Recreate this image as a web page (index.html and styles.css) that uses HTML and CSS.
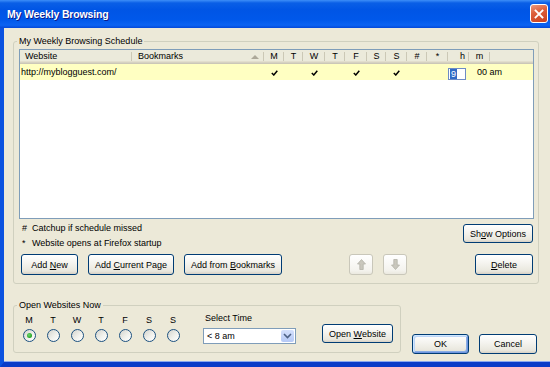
FILE: index.html
```html
<!DOCTYPE html>
<html lang="en">
<head>
    <meta charset="UTF-8">
    <meta name="viewport" content="width=device-width, initial-scale=1.0">
    <title>My Weekly Browsing</title>
    <link rel="stylesheet" href="styles.css">
</head>
<body>
    <div class="window">
        <div class="titlebar">
            <span class="title">My Weekly Browsing</span>
            <button class="close" aria-label="Close">
                <svg viewBox="0 0 10 10" width="10" height="10"><path d="M1.5 1.5l7 7M8.5 1.5l-7 7" stroke="#fff" stroke-width="1.8" stroke-linecap="square"/></svg>
            </button>
        </div>
        <div class="frame">
            <fieldset class="group schedule">
                <legend>My Weekly Browsing Schedule</legend>
                <div class="list">
                    <table class="grid">
                        <thead>
                            <tr>
                                <th class="c-site left">Website</th>
                                <th class="c-bm left">Bookmarks<span class="sort"></span></th>
                                <th class="c-mon">M</th>
                                <th class="c-tue">T</th>
                                <th class="c-wed">W</th>
                                <th class="c-thu">T</th>
                                <th class="c-fri">F</th>
                                <th class="c-sat">S</th>
                                <th class="c-sun">S</th>
                                <th class="c-catch">#</th>
                                <th class="c-start">*</th>
                                <th class="c-hour right">h</th>
                                <th class="c-min">m</th>
                                <th class="c-fill"></th>
                            </tr>
                        </thead>
                        <tbody>
                            <tr class="selected">
                                <td class="site">http://myblogguest.com/</td>
                                <td></td>
                                <td><svg class="tick" viewBox="0 0 7 6" width="7" height="6"><path d="M0.8 3l2 2L6.3 0.8" fill="none" stroke="#000" stroke-width="1.5"/></svg></td>
                                <td></td>
                                <td><svg class="tick" viewBox="0 0 7 6" width="7" height="6"><path d="M0.8 3l2 2L6.3 0.8" fill="none" stroke="#000" stroke-width="1.5"/></svg></td>
                                <td></td>
                                <td><svg class="tick" viewBox="0 0 7 6" width="7" height="6"><path d="M0.8 3l2 2L6.3 0.8" fill="none" stroke="#000" stroke-width="1.5"/></svg></td>
                                <td></td>
                                <td><svg class="tick" viewBox="0 0 7 6" width="7" height="6"><path d="M0.8 3l2 2L6.3 0.8" fill="none" stroke="#000" stroke-width="1.5"/></svg></td>
                                <td></td>
                                <td></td>
                                <td class="hour"><span class="edit"><span class="sel">9</span></span></td>
                                <td class="minute">00 am</td>
                                <td></td>
                            </tr>
                        </tbody>
                    </table>
                </div>
                <div class="notes-row">
                    <ul class="notes">
                        <li><span class="sym">#</span>Catchup if schedule missed</li>
                        <li><span class="sym">*</span>Website opens at Firefox startup</li>
                    </ul>
                    <button class="btn show-options">Sh<u>o</u>w Options</button>
                </div>
                <div class="actions">
                    <button class="btn add-new">Add <u>N</u>ew</button>
                    <button class="btn">Add <u>C</u>urrent Page</button>
                    <button class="btn">Add from <u>B</u>ookmarks</button>
                    <div class="arrows">
                        <button class="btn arrow" disabled>
                            <svg viewBox="0 0 9 11" width="9" height="11"><path d="M4.5 0.5L8.5 5H6.2v5.5H2.8V5H0.5z" fill="#c9c7bd" stroke="#b4b2a8" stroke-width="0.8"/></svg>
                        </button>
                        <button class="btn arrow" disabled>
                            <svg viewBox="0 0 9 11" width="9" height="11"><path d="M4.5 10.5L8.5 6H6.2V0.5H2.8V6H0.5z" fill="#c9c7bd" stroke="#b4b2a8" stroke-width="0.8"/></svg>
                        </button>
                    </div>
                    <button class="btn delete"><u>D</u>elete</button>
                </div>
            </fieldset>

            <div class="bottom">
                <fieldset class="group open-now">
                    <legend>Open Websites Now</legend>
                    <div class="days">
                        <div class="day"><span>M</span><span class="radio checked"></span></div>
                        <div class="day"><span>T</span><span class="radio"></span></div>
                        <div class="day"><span>W</span><span class="radio"></span></div>
                        <div class="day"><span>T</span><span class="radio"></span></div>
                        <div class="day"><span>F</span><span class="radio"></span></div>
                        <div class="day"><span>S</span><span class="radio"></span></div>
                        <div class="day"><span>S</span><span class="radio"></span></div>
                    </div>
                    <div class="time">
                        <span class="time-label">Select Time</span>
                        <div class="select">
                            <span class="select-value">&lt; 8 am</span>
                            <span class="select-btn">
                                <svg viewBox="0 0 9 6" width="9" height="6"><path d="M1 1l3.5 3.5L8 1" fill="none" stroke="#4d6185" stroke-width="1.6"/></svg>
                            </span>
                        </div>
                    </div>
                    <button class="btn open-site">Open <u>W</u>ebsite</button>
                </fieldset>
                <button class="btn ok default">OK</button>
                <button class="btn cancel">Cancel</button>
            </div>
        </div>
    </div>
</body>
</html>
```

FILE: styles.css
```css
body {
    margin: 0;
    font-family: "Liberation Sans", Arial, sans-serif;
    font-size: 9px;
    color: #000;
}
.window {
    width: 550px;
    height: 367px;
    display: flex;
    flex-direction: column;
}
.titlebar {
    height: 28px;
    flex: none;
    display: flex;
    align-items: flex-start;
    padding: 0 2px 0 7px;
    box-sizing: border-box;
    background: linear-gradient(180deg, #3d8ef8 0, #0a5fe6 3px, #0055e5 35%, #0058ea 70%, #0b63f2 90%, #0448d8 100%);
}
.title {
    margin-top: 8px;
    color: #fff;
    font-size: 10.5px;
    font-weight: bold;
    letter-spacing: -0.15px;
    text-shadow: 1px 1px #0c1c8c;
}
.close {
    margin: 4px 0 0 auto;
    width: 18px;
    height: 19px;
    padding: 0;
    display: flex;
    align-items: center;
    justify-content: center;
    border: 1px solid #fff;
    border-radius: 3px;
    background: linear-gradient(160deg, #eb9a7e 0, #dd5f3c 40%, #c94020 100%);
}
.frame {
    flex: 1;
    display: flex;
    flex-direction: column;
    background: #ece9d8;
    border-left: 4px solid #0b52e0;
    border-bottom: 5px solid #0a3cc8;
    box-shadow: inset 0 -1px #8aa8f0;
    padding: 0 11px 9px 9px;
}
.group {
    margin: 0;
    min-width: 0;
    border: 1px solid #d0d0bf;
    border-radius: 3px;
}
.group legend {
    padding: 0 2px;
    margin-left: -2px;
    line-height: 12px;
}
.schedule {
    margin-top: 7px;
    padding: 2px 4px 8px 5px;
}
.list {
    height: 170px;
    box-sizing: border-box;
    border: 1px solid #7f9db9;
    background: #fff;
    overflow: hidden;
}
.grid {
    width: 100%;
    table-layout: fixed;
    border-collapse: separate;
    border-spacing: 0;
}
.grid th,
.grid td {
    box-sizing: border-box;
    padding: 0;
    text-align: center;
    white-space: nowrap;
}
.grid th {
    height: 14px;
    font-weight: normal;
    line-height: 11px;
    padding-bottom: 2px;
    background: linear-gradient(#cbc8b6, #cbc8b6) right 2px / 1px 9px no-repeat, #ebeadb;
    box-shadow: inset 0 -1px #cbc7b8, inset 0 -2px #d6d2c2, inset 0 -3px #e2decd;
}
.grid th.c-fill {
    background: #ebeadb;
}
.grid th.left {
    text-align: left;
    padding-left: 5px;
}
.grid th.c-bm {
    padding-left: 6px;
}
.grid th.right {
    text-align: right;
    padding-right: 4px;
}
.sort {
    float: right;
    margin: 4px 5px 0 0;
    width: 0;
    height: 0;
    border-left: 4px solid transparent;
    border-right: 4px solid transparent;
    border-bottom: 4px solid #aca899;
}
.c-site { width: 112px; }
.c-bm { width: 132px; }
.c-mon { width: 20px; }
.c-tue { width: 19px; }
.c-wed { width: 22px; }
.c-thu { width: 20px; }
.c-fri { width: 22px; }
.c-sat { width: 19px; }
.c-sun { width: 21px; }
.c-catch { width: 20px; }
.c-start { width: 21px; }
.c-hour { width: 21px; }
.c-min { width: 21px; }
.grid td {
    height: 16px;
    overflow: visible;
}
.selected td {
    background: #ffffc2;
}
.grid td.site {
    text-align: left;
    padding-left: 1px;
}
.tick {
    display: block;
    margin: 1px auto 0;
}
.grid td.hour {
    text-align: left;
    vertical-align: top;
}
.edit {
    display: block;
    width: 18px;
    height: 12px;
    margin-top: 4px;
    box-sizing: border-box;
    border: 1px solid #6d8bc4;
    background: #fff;
    line-height: 10px;
    padding-left: 1px;
}
.sel {
    display: inline-block;
    background: #316ac5;
    color: #fff;
    padding: 0 1px;
}
.grid td.minute {
    text-align: left;
    padding-left: 8px;
}
.notes-row {
    display: flex;
    align-items: flex-start;
    height: 30px;
    margin-top: 2px;
    padding-right: 1px;
}
.notes {
    list-style: none;
    margin: 0;
    padding: 0 0 0 3px;
    line-height: 15px;
}
.sym {
    display: inline-block;
    width: 10px;
}
.btn {
    font: 9px "Liberation Sans", Arial, sans-serif;
    color: #000;
    height: 21px;
    padding: 0 6px;
    border: 1px solid #003c74;
    border-radius: 3px;
    background: linear-gradient(#fff 0, #f4f3ee 45%, #e9e7dd 85%, #d6d0c5 100%);
    white-space: nowrap;
}
.btn u {
    text-underline-offset: 1px;
}
.show-options {
    margin: 3px 0 0 auto;
    height: 19px;
}
.actions {
    display: flex;
    gap: 10px;
    margin-top: 3px;
    padding: 0 1px 0 2px;
}
.add-new {
    min-width: 57px;
}
.arrows {
    display: flex;
    gap: 10px;
    margin-left: auto;
}
.btn.arrow {
    width: 24px;
    padding: 0;
    display: flex;
    align-items: center;
    justify-content: center;
    border-color: #c9c7ba;
    background: linear-gradient(#fff, #f4f3ee 80%, #ebe9df);
}
.delete {
    min-width: 58px;
    margin-left: 58px;
}
.bottom {
    display: flex;
    align-items: flex-end;
    margin-top: 15px;
}
.open-now {
    width: 388px;
    box-sizing: border-box;
    padding: 4px 5px 8px 5px;
    display: flex;
    align-items: flex-start;
}
.days {
    display: flex;
    margin-left: -2px;
}
.day {
    width: 24px;
    display: flex;
    flex-direction: column;
    align-items: center;
    gap: 3px;
    line-height: 11px;
}
.radio {
    width: 13px;
    height: 13px;
    box-sizing: border-box;
    border: 1px solid #1c5180;
    border-radius: 50%;
    background: linear-gradient(135deg, #d4d4ce, #f3f3ef 60%, #fff);
    display: flex;
    align-items: center;
    justify-content: center;
}
.radio.checked::after {
    content: "";
    width: 5px;
    height: 5px;
    border-radius: 50%;
    background: radial-gradient(circle at 40% 40%, #6fd86f, #21a121 70%);
}
.time {
    display: flex;
    flex-direction: column;
    margin: -2px 0 0 18px;
    width: 93px;
}
.time-label {
    line-height: 11px;
    margin: 0 0 4px 2px;
}
.select {
    display: flex;
    height: 16px;
    box-sizing: border-box;
    border: 1px solid #7f9db9;
    background: #fff;
}
.select-value {
    flex: 1;
    padding-left: 3px;
    line-height: 14px;
}
.select-btn {
    width: 13px;
    margin: 1px;
    border-radius: 2px;
    background: linear-gradient(#d4e0fc, #b5c9f6);
    display: flex;
    align-items: center;
    justify-content: center;
}
.open-site {
    height: 19px;
    margin: 9px 0 0 26px;
}
.ok {
    min-width: 57px;
    height: 20px;
    margin: 0 0 -1px 11px;
}
.default {
    box-shadow: inset 1px 1px #cee7ff, inset -1px -1px #6e94e0, inset 2px 2px #bcd4f6, inset -2px -2px #89ade4;
}
.cancel {
    min-width: 58px;
    height: 20px;
    margin: 0 2px -1px 10px;
}
```
